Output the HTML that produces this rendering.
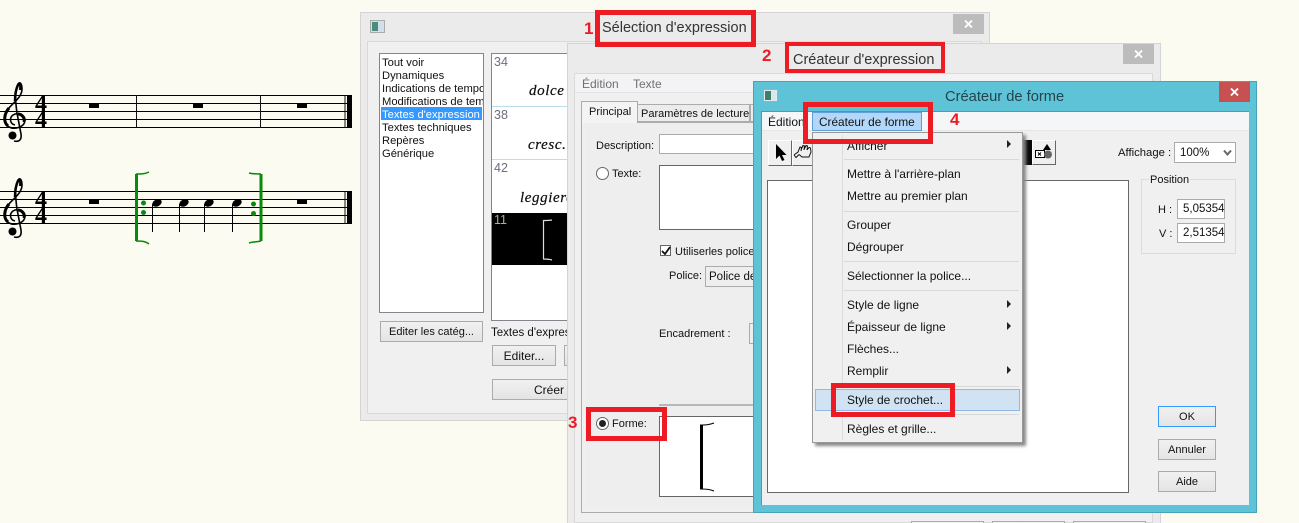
<!DOCTYPE html>
<html lang="fr"><head><meta charset="utf-8"><title>Sélection d'expression</title>
<style>
html,body{margin:0;padding:0;width:1299px;height:523px;overflow:hidden}
body{background:#fbfbf1;font-family:"Liberation Sans",sans-serif;font-size:11px;color:#111}
#root{position:absolute;left:0;top:0;width:1299px;height:523px;overflow:hidden;background:#fbfbf1}
#root div,#root svg{position:absolute;box-sizing:border-box}
.t{white-space:nowrap;line-height:14px;height:14px;margin-top:1px}
.b{background:linear-gradient(#f1f1f1,#e4e4e4);border:1px solid #ababab;text-align:center;line-height:21px;white-space:nowrap;overflow:hidden}
.r{border-style:solid;border-color:#ed1c24;background:transparent}
.n{color:#ed1c24;font-weight:bold;font-size:17px;line-height:18px;height:18px;margin-top:0}
.s{height:1px;background:#d9d9d9;left:31px;right:3px}
.x{height:20px}
.l{left:3px}
.m{left:34px;font-size:12px;margin-top:0}
.a{width:0;height:0;border-left:4px solid #222;border-top:4px solid transparent;border-bottom:4px solid transparent;left:194px}
</style></head><body><div id="root">

<svg style="left:0;top:0" width="360" height="260" viewBox="0 0 360 260">
<defs><g id="st">
<path d="M0 95.500H352M0 103.500H352M0 111.500H352M0 119.500H352M0 127.500H352" stroke="#000" stroke-width="1" fill="none"/>
<path d="M15 125C10 124 9 118 13 115C18 112 25 115 25 120C25 127 15 130 9 127C3 123 3 115 9 108C14 102 22 97 22 89C22 84 20 81 18 84C15 89 15 99 17 113L21 134C22 141 18 142 14 141" fill="none" stroke="#000" stroke-width="1.600"/>
<path d="M8 126C3 122 4 114 9 108M24 122C25 118 22 114 18 114" fill="none" stroke="#000" stroke-width="3"/>
<path d="M20 90C21 86 20 84 18 85C16 89 15 95 15 101" fill="none" stroke="#000" stroke-width="2.500"/>
<circle cx="12.500" cy="135.500" r="4" fill="#000"/>
<path d="M345 95V128" stroke="#111" stroke-width="1"/><rect x="347" y="95" width="5" height="33" fill="#000"/>
</g></defs>
<use href="#st"/><use href="#st" y="96"/>
<path d="M136.500 95V128M260.500 95V128" stroke="#111"/>
<path d="M89 104h10v4h-10zM193 104h10v4h-10zM297 104h10v4h-10zM89 200h10v4h-10zM297 200h10v4h-10z" fill="#000"/>
<g fill="#000"><ellipse cx="157" cy="203" rx="5" ry="3.400" transform="rotate(-25 157 203)"/><ellipse cx="184" cy="203" rx="5" ry="3.400" transform="rotate(-25 184 203)"/><ellipse cx="209" cy="203" rx="5" ry="3.400" transform="rotate(-25 209 203)"/><ellipse cx="237" cy="203" rx="5" ry="3.400" transform="rotate(-25 237 203)"/></g>
<path d="M152.500 204V232M179.500 204V232M204.500 204V232M232.500 204V232" stroke="#000"/>
<g fill="#0a8a0a"><circle cx="143.500" cy="203" r="2.500"/><circle cx="143.500" cy="212.500" r="2.500"/><circle cx="253.500" cy="204" r="2.500"/><circle cx="253.500" cy="213.500" r="2.500"/></g>
<path d="M136.500 174V241" fill="none" stroke="#0a8a0a" stroke-width="3"/>
<path d="M136 174C141 174 145 174 149 172M136 241C141 241 145 241 149 244" fill="none" stroke="#0a8a0a" stroke-width="1.500"/>
<path d="M261 174V241" stroke="#0a8a0a" stroke-width="3"/><path d="M261 174C256 174 252 174 249 173M261 241C256 242 252 242 249 243" fill="none" stroke="#0a8a0a" stroke-width="1.500"/>
<g font-family="Liberation Serif" font-weight="bold" font-size="24" fill="#000"><text x="35" y="111">4</text><text x="35" y="127">4</text><text x="35" y="207">4</text><text x="35" y="223">4</text></g>
</svg>

<!-- Window 1 -->
<div style="left:360px;top:12px;width:630px;height:409px;background:#ebebeb;border:1px solid #d4d4d4">
<div style="left:6px;top:28px;width:615px;height:373px;background:#f0f0f0;border:1px solid #d9d9d9"></div>
<svg style="left:9px;top:7px" width="16" height="14"><rect x=".5" y=".5" width="14" height="12" fill="#ddd" stroke="#aaa"/><rect x="2" y="2" width="6" height="9" fill="#4b8c7c"/><rect x="8" y="2" width="5" height="9" fill="#cfe0ea"/></svg>
<div class="x" style="left:592px;top:1px;width:31px;background:#bcbcbc"><svg style="left:11px;top:6px" width="9" height="8"><path d="M1 .5L8 7.500M8 .5L1 7.500" stroke="#fff" stroke-width="1.800"/></svg></div>
</div>
<div style="left:379px;top:53px;width:105px;height:260px;background:#fff;border:1px solid #85858d"></div>
<div style="left:381px;top:107px;width:101px;height:13px;background:#3399ff"></div>
<div style="left:380px;top:54px;width:103px;height:110px;overflow:hidden;font-size:11.200px">
<div class="t" style="left:2px;top:1px">Tout voir</div><div class="t" style="left:2px;top:14px">Dynamiques</div><div class="t" style="left:2px;top:27px">Indications de tempo</div><div class="t" style="left:2px;top:40px">Modifications de tempo</div><div class="t" style="left:2px;top:53px;color:#fff">Textes d'expression</div><div class="t" style="left:2px;top:66px">Textes techniques</div><div class="t" style="left:2px;top:79px">Repères</div><div class="t" style="left:2px;top:92px">Générique</div>
</div>
<div style="left:491px;top:53px;width:90px;height:268px;background:#fff;border:1px solid #85858d"></div>
<div style="left:492px;top:106px;width:80px;height:1px;background:#bcdce8"></div>
<div style="left:492px;top:159px;width:80px;height:1px;background:#bcdce8"></div>
<div style="left:492px;top:213px;width:80px;height:52px;background:#000"></div>
<div class="t" style="left:494px;top:54px;color:#6d6d80;font-size:12.500px">34</div>
<div class="t" style="left:494px;top:107px;color:#6d6d80;font-size:12.500px">38</div>
<div class="t" style="left:494px;top:160px;color:#6d6d80;font-size:12.500px">42</div>
<div class="t" style="left:494px;top:212px;color:#a8b490;font-size:12.500px">11</div>
<div class="t" style="left:529px;top:83px;font:italic 15px/14px 'Liberation Serif',serif;letter-spacing:.6px;-webkit-text-stroke:.2px #000">dolce</div>
<div class="t" style="left:528px;top:137px;font:italic 15px/14px 'Liberation Serif',serif;letter-spacing:.6px;-webkit-text-stroke:.2px #000">cresc.</div>
<div class="t" style="left:520px;top:190px;font:italic 15px/14px 'Liberation Serif',serif;letter-spacing:.6px;-webkit-text-stroke:.2px #000">leggiero</div>
<svg style="left:540px;top:218px" width="14" height="44"><path d="M3.500 2V41M3 2.500C6 2.500 9 2.500 12 2M3 41C6 41 9 41 12 42" fill="none" stroke="#ddd" stroke-width="1.200"/></svg>
<div class="b" style="left:380px;top:321px;width:103px;height:21px">Editer les catég...</div>
<div class="t" style="left:491px;top:325px;font-size:11.500px">Textes d'expression</div>
<div class="b" style="left:492px;top:345px;width:64px;height:21px;font-size:12px">Editer...</div>
<div class="b" style="left:564px;top:345px;width:40px;height:21px"></div>
<div class="b" style="left:492px;top:379px;width:200px;height:21px;text-align:left;padding-left:41px;font-size:12px">Créer Texte</div>

<!-- Window 2 -->
<div style="left:567px;top:43px;width:594px;height:490px;background:#ebebeb;border:1px solid #d4d4d4"></div>
<div class="x" style="left:1123px;top:44px;width:31px;background:#bcbcbc"><svg style="left:11px;top:6px" width="9" height="8"><path d="M1 .5L8 7.500M8 .5L1 7.500" stroke="#fff" stroke-width="1.800"/></svg></div>
<div style="left:574px;top:73px;width:579px;height:450px;background:#f0f0f0;border:1px solid #dadada"></div>
<div style="left:575px;top:74px;width:577px;height:19px;background:#f3f3f5;border-bottom:1px solid #e3e3e3"></div>
<div class="t" style="left:582px;top:76px;color:#707070;font-size:12px">Édition</div>
<div class="t" style="left:633px;top:76px;color:#707070;font-size:12px">Texte</div>
<div style="left:581px;top:122px;width:570px;height:391px;background:#f0f0f0;border:1px solid #acacac"></div>
<div style="left:585px;top:123px;width:560px;height:386px;background:#eee"></div>
<div style="left:581px;top:101px;width:57px;height:22px;background:#f4f4f4;border:1px solid #acacac;border-bottom:0"></div>
<div class="t" style="left:589px;top:104px">Principal</div>
<div style="left:638px;top:104px;width:112px;height:18px;background:#ececec;border:1px solid #acacac;border-left:0"></div>
<div class="t" style="left:641px;top:106px">Paramètres de lecture</div>
<div style="left:750px;top:104px;width:6px;height:18px;background:#ececec;border:1px solid #acacac"></div>
<div class="t" style="left:596px;top:138px">Description:</div>
<div style="left:659px;top:134px;width:110px;height:20px;background:#fff;border:1px solid #ababab"></div>
<div style="left:596px;top:167px;width:13px;height:13px;border-radius:50%;background:#fff;border:1px solid #666"></div>
<div class="t" style="left:612px;top:166px">Texte:</div>
<div style="left:659px;top:165px;width:110px;height:65px;background:#fff;border:1px solid #666"></div>
<div style="left:660px;top:245px;width:11px;height:11px;background:#fff;border:1px solid #666"></div>
<svg style="left:660px;top:245px" width="12" height="12"><path d="M2 6L5 9L10 2" fill="none" stroke="#111" stroke-width="1.800"/></svg>
<div class="t" style="left:675px;top:244px">Utiliserles polices</div>
<div class="t" style="left:669px;top:268px">Police:</div>
<div style="left:705px;top:266px;width:60px;height:21px;background:#eee;border:1px solid #ababab;line-height:21px;padding-left:3px;white-space:nowrap;overflow:hidden;font-size:11.500px">Police de</div>
<div class="t" style="left:659px;top:326px">Encadrement :</div>
<div style="left:749px;top:323px;width:10px;height:21px;background:#eee;border:1px solid #ababab"></div>
<div style="left:659px;top:404px;width:100px;height:2px;background:#b8b8b8"></div>
<div style="left:596px;top:417px;width:13px;height:13px;border-radius:50%;background:#fff;border:1px solid #666"></div>
<div style="left:599px;top:420px;width:7px;height:7px;border-radius:50%;background:#222"></div>
<div class="t" style="left:612px;top:416px">Forme:</div>
<div style="left:659px;top:416px;width:110px;height:81px;background:#fff;border:1px solid #666"></div>
<svg style="left:698px;top:422px" width="20" height="70"><path d="M3.500 3V67" stroke="#000" stroke-width="3" fill="none"/><path d="M2 3C7 3 11 3 16 1M2 67C7 67 11 67 16 69" stroke="#000" stroke-width="1" fill="none"/></svg>
<div class="b" style="left:911px;top:521px;width:73px;height:20px"></div>
<div class="b" style="left:992px;top:521px;width:73px;height:20px"></div>
<div class="b" style="left:1073px;top:521px;width:73px;height:20px"></div>

<!-- Window 3 -->
<div style="left:753px;top:81px;width:504px;height:432px;background:#5fc3d8;border:1px solid #46a3b8"></div>
<svg style="left:763px;top:89px" width="16" height="14"><rect x=".5" y=".5" width="14" height="12" fill="#e8e8e8" stroke="#aaa"/><rect x="2" y="2" width="6" height="9" fill="#3f7f70"/><rect x="8" y="2" width="5" height="9" fill="#d8e8ef"/></svg>
<div class="t" style="left:945px;top:88px;font-size:14.700px;line-height:16px;height:16px;color:#24434c">Créateur de forme</div>
<div class="x" style="left:1219px;top:82px;width:31px;background:#c75050"><svg style="left:11px;top:6px" width="9" height="8"><path d="M1 .5L8 7.500M8 .5L1 7.500" stroke="#fff" stroke-width="1.800"/></svg></div>
<div style="left:761px;top:111px;width:488px;height:394px;background:#f0f0f0;border:1px solid #3f9fb3;border-width:1px 0 0 1px"></div>
<div style="left:762px;top:112px;width:487px;height:19px;background:#f5f6f8;border-bottom:1px solid #e6e6e6"></div>
<div class="t" style="left:768px;top:114px;font-size:12px">Édition</div>
<div style="left:768px;top:140px;width:24px;height:26px;background:#f0f0f0;border:1px solid #fff;border-right-color:#666;border-bottom-color:#666"></div>
<svg style="left:768px;top:140px" width="24" height="26"><path d="M8 4V19L11.500 15.500L14 21L16.500 20L14 15H18.500Z" fill="#000"/></svg>
<div style="left:792px;top:140px;width:24px;height:26px;background:#f0f0f0;border:1px solid #fff;border-right-color:#666;border-bottom-color:#666"></div>
<svg style="left:792px;top:140px" width="24" height="26"><path d="M2 15L6 12L8 7L9.500 7.500L9 11M9 10L11 5.500L12.500 6L12 10M12 9.500L14 5.500L15.500 6L15 10M15 10L17 7.500L18.500 8L19 12L17 17H10L7 14.500M2 15L4 17.500L7 14.500" fill="none" stroke="#111" stroke-width="1"/></svg>
<div style="left:1023px;top:140px;width:9px;height:25px;background:#0a0a0a"></div>
<div style="left:1032px;top:140px;width:24px;height:25px;background:#f0f0f0;border:1px solid #fff;border-right-color:#666;border-bottom-color:#666"></div>
<svg style="left:1032px;top:140px" width="24" height="25"><path d="M11 10L15 4L19 10Z" fill="#000"/><rect x="3.500" y="10.500" width="9" height="7" fill="#fff" stroke="#000"/><circle cx="16" cy="14.500" r="4" fill="#666"/><path d="M6 12.500l3 3M9 12.500l-3 3" stroke="#000"/></svg>
<div style="left:767px;top:180px;width:362px;height:313px;background:#fff;border:1px solid #666"></div>
<div class="t" style="left:1118px;top:145px;font-size:11.300px">Affichage :</div>
<div style="left:1174px;top:142px;width:62px;height:21px;background:#fff;border:1px solid #ababab;line-height:21px;padding-left:5px;font-size:11.500px">100%</div>
<svg style="left:1223px;top:149px" width="10" height="8"><path d="M1 1.500L4.500 5.500L8 1.500" fill="none" stroke="#666" stroke-width="2"/></svg>
<div style="left:1141px;top:179px;width:95px;height:75px;border:1px solid #dcdcdc"></div>
<div class="t" style="left:1149px;top:172px;background:#f0f0f0;padding:0 1px">Position</div>
<div class="t" style="left:1158px;top:202px">H :</div>
<div class="t" style="left:1159px;top:226px">V :</div>
<div style="left:1177px;top:199px;width:48px;height:20px;background:#fff;border:1px solid #ababab;line-height:19px;padding-left:5px;font-size:11.500px">5,05354</div>
<div style="left:1177px;top:223px;width:48px;height:20px;background:#fff;border:1px solid #ababab;line-height:19px;padding-left:5px;font-size:11.500px">2,51354</div>
<div class="b" style="left:1158px;top:406px;width:58px;height:21px;border-color:#3399ff">OK</div>
<div class="b" style="left:1158px;top:439px;width:58px;height:21px">Annuler</div>
<div class="b" style="left:1158px;top:471px;width:58px;height:21px">Aide</div>

<!-- Menu -->
<div style="left:812px;top:112px;width:110px;height:19px;background:#b3d7f8;border:1px solid #5f9fdc"></div>
<div class="t" style="left:819px;top:114px;font-size:11.800px">Créateur de forme</div>
<div style="left:812px;top:132px;width:211px;height:311px;background:#f0f0f0;border:1px solid #999;box-shadow:3px 3px 3px #888">
<div style="left:29px;top:2px;width:1px;height:305px;background:#dcdcdc"></div>
<div class="s" style="top:26px"></div><div class="s" style="top:78px"></div><div class="s" style="top:128px"></div><div class="s" style="top:157px"></div><div class="s" style="top:253px"></div><div class="s" style="top:281px"></div>
<div style="left:2px;top:256px;width:205px;height:22px;background:#d1e2f2;border:1px solid #90b8e8"></div>
<div class="t m" style="top:6px">Afficher</div>
<div class="t m" style="top:34px">Mettre à l'arrière-plan</div>
<div class="t m" style="top:56px">Mettre au premier plan</div>
<div class="t m" style="top:85px">Grouper</div>
<div class="t m" style="top:107px">Dégrouper</div>
<div class="t m" style="top:136px">Sélectionner la police...</div>
<div class="t m" style="top:165px">Style de ligne</div>
<div class="t m" style="top:187px">Épaisseur de ligne</div>
<div class="t m" style="top:209px">Flèches...</div>
<div class="t m" style="top:231px">Remplir</div>
<div class="t m" style="top:260px">Style de crochet...</div>
<div class="t m" style="top:289px">Règles et grille...</div>
<div class="a" style="top:7px"></div><div class="a" style="top:167px"></div><div class="a" style="top:189px"></div><div class="a" style="top:233px"></div>
</div>

<!-- Annotations -->
<div class="t" style="left:602px;top:19px;font-size:14.500px;line-height:16px;height:16px;color:#333">Sélection d'expression</div>
<div class="t" style="left:793px;top:51px;font-size:14.500px;line-height:16px;height:16px;color:#333">Créateur d'expression</div>
<div class="r" style="left:595px;top:10px;width:161px;height:37px;border-width:5px"></div>
<div class="r" style="left:785px;top:42px;width:160px;height:31px;border-width:4px"></div>
<div class="r" style="left:586px;top:407px;width:81px;height:34px;border-width:5px"></div>
<div class="r" style="left:803px;top:102px;width:130px;height:42px;border-width:5px"></div>
<div class="r" style="left:831px;top:383px;width:124px;height:34px;border-width:5px"></div>
<div class="t n" style="left:584px;top:20px">1</div>
<div class="t n" style="left:762px;top:47px">2</div>
<div class="t n" style="left:568px;top:414px">3</div>
<div class="t n" style="left:950px;top:111px">4</div>
</div></body></html>
